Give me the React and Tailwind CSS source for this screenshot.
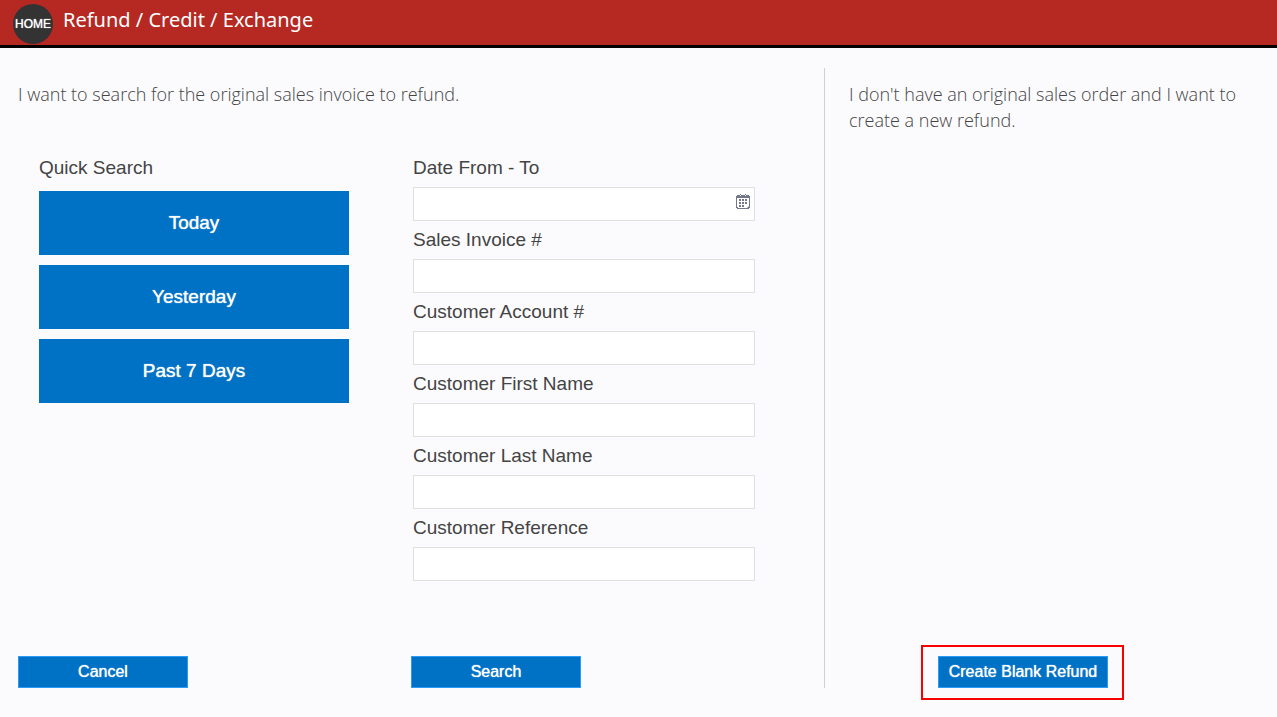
import React, { useState } from 'react';

const quickSearches = ['Today', 'Yesterday', 'Past 7 Days'];

const searchFields = [
  { id: 'dateRange', label: 'Date From - To', calendar: true },
  { id: 'salesInvoice', label: 'Sales Invoice #' },
  { id: 'customerAccount', label: 'Customer Account #' },
  { id: 'customerFirstName', label: 'Customer First Name' },
  { id: 'customerLastName', label: 'Customer Last Name' },
  { id: 'customerReference', label: 'Customer Reference' }
];

const CalendarIcon = () => (
  <svg width="14" height="15" viewBox="0 0 14 15" fill="none" aria-hidden="true">
    <path
      fill="#74778a"
      d="M1 1h3v1h1V1h4v1h1V1h3v1h1v12h-1v1H1v-1H0V2h1zM1 4v9h1v1h9l2-2V4z"
      fillRule="evenodd"
    />
    <path fill="#74778a" d="M4 0h1v1H4zM9 0h1v1H9z" />
    <path
      fill="#74778a"
      d="M3 5h2v2H3zM6 5h2v2H6zM9 5h2v2H9zM3 8h2v2H3zM6 8h2v2H6zM9 8h2v2H9zM3 11h2v2H3zM6 11h2v2H6z"
    />
  </svg>
);

const ActionButton = ({ children, ...props }) => (
  <button
    type="button"
    className="h-8 w-[170px] border border-[#2b9bf7] bg-[#0072c6] text-base leading-5 text-white text-shadow-[0_0_1px_#ffffff]"
    {...props}
  >
    {children}
  </button>
);

const SearchField = ({ id, label, calendar, value, onChange }) => (
  <div>
    <label htmlFor={id} className="block h-[38px] text-[19px] leading-[38px]">
      {label}
    </label>
    <div className="relative">
      <input
        id={id}
        type="text"
        value={value}
        onChange={(event) => onChange(id, event.target.value)}
        className="block h-[34px] w-full border border-[#dfdfe8] bg-white px-2 text-base outline-none focus:border-[#0072c6]"
      />
      {calendar && (
        <button type="button" aria-label="Choose dates" className="absolute top-[7px] right-[5px]">
          <CalendarIcon />
        </button>
      )}
    </div>
  </div>
);

const App = () => {
  const [values, setValues] = useState({});

  const handleChange = (id, value) => {
    setValues((current) => ({ ...current, [id]: value }));
  };

  return (
    <div className="flex min-h-screen flex-col bg-[#fbfbfd] font-['Liberation_Sans',Arial,sans-serif] text-[#444444]">
      <header className="flex h-12 items-start border-b-3 border-black bg-[#b62822] pl-[13px] text-white">
        <a
          href="#home"
          className="mt-1 flex size-10 items-center justify-center rounded-full bg-[#333333] text-xs text-shadow-[0_0_1px_#ffffff]"
        >
          HOME
        </a>
        <h1 className="ml-[10px] font-['Noto_Sans','Open_Sans',sans-serif] text-xl leading-10">
          Refund / Credit / Exchange
        </h1>
      </header>

      <main className="flex grow pt-5 pb-[29px]">
        <section className="flex w-[824px] shrink flex-col justify-between pl-[18px]">
          <div>
            <p className="pt-[13px] font-['Open_Sans','Noto_Sans',sans-serif] text-lg leading-[26px] font-light">
              I want to search for the original sales invoice to refund.
            </p>
            <div className="grid grid-cols-[393fr_413fr] pt-[42px]">
              <div className="pr-[62px] pl-[21px]">
                <h2 className="h-[38px] text-[19px] leading-[38px]">Quick Search</h2>
                <div className="flex flex-col gap-[10px] pt-1">
                  {quickSearches.map((label) => (
                    <button
                      key={label}
                      type="button"
                      className="h-16 bg-[#0072c6] text-[19px] text-white text-shadow-[0_0_1px_#ffffff]"
                    >
                      {label}
                    </button>
                  ))}
                </div>
              </div>
              <form id="invoiceSearch" className="pr-[69px] pl-0.5">
                {searchFields.map((field) => (
                  <SearchField
                    key={field.id}
                    {...field}
                    value={values[field.id] || ''}
                    onChange={handleChange}
                  />
                ))}
              </form>
            </div>
          </div>
          <div className="grid grid-cols-[393fr_413fr]">
            <ActionButton>Cancel</ActionButton>
            <ActionButton form="invoiceSearch">Search</ActionButton>
          </div>
        </section>

        <section className="flex flex-1 flex-col justify-between border-l border-[#d0d0d4] px-6">
          <p className="pt-[13px] font-['Open_Sans','Noto_Sans',sans-serif] text-lg leading-[26px] font-light">
            I don't have an original sales order and I want to create a new refund.
          </p>
          <div className="flex justify-center pr-14">
            <div className="relative">
              <ActionButton>Create Blank Refund</ActionButton>
              <span className="pointer-events-none absolute -top-[11px] -right-4 -bottom-3 -left-[17px] border-2 border-[#f80000]" />
            </div>
          </div>
        </section>
      </main>
    </div>
  );
};

export default App;
